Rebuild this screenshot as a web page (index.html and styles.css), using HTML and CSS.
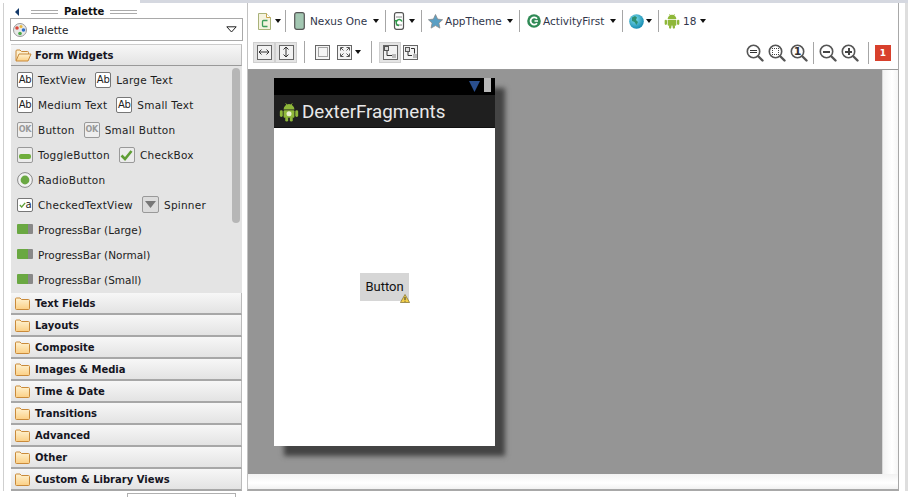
FILE: index.html
```html
<!DOCTYPE html>
<html lang="en">
<head>
<meta charset="utf-8">
<title>DexterFragments layout editor</title>
<link rel="stylesheet" href="styles.css">
</head>
<body>
<svg class="defs" width="0" height="0" aria-hidden="true">
  <defs>
    <linearGradient id="fold" x1="0" y1="0" x2="0" y2="1"><stop offset="0" stop-color="#fff3d2"/><stop offset="1" stop-color="#fbcf84"/></linearGradient>
    <radialGradient id="globe" cx=".4" cy=".35" r=".7"><stop offset="0" stop-color="#7fe0ee"/><stop offset="1" stop-color="#0f85ad"/></radialGradient>
    <symbol id="folder" viewBox="0 0 15 13">
      <path d="M1.5 12.5 a1 1 0 0 1-1-1V2 a1 1 0 0 1 1-1h3.5l1.5 1.5h7 a1 1 0 0 1 1 1v8 a1 1 0 0 1-1 1z" fill="url(#fold)" stroke="#c98a3a"/>
    </symbol>
    <symbol id="folder-open" viewBox="0 0 17 13">
      <path d="M1 11.5V2 a1 1 0 0 1 1-1h3l1.5 1.5h6 a1 1 0 0 1 1 1V5" fill="#fdf0cf" stroke="#c98a3a"/>
      <path d="M1 12 l3-7 h12 l-3 7z" fill="url(#fold)" stroke="#c98a3a"/>
    </symbol>
    <symbol id="android" viewBox="0 0 24 24">
      <g fill="#8fb83a">
        <path d="M5.500 9 a6.500 6.500 0 0 1 13 0z"/>
        <rect x="5.500" y="10" width="13" height="9" rx="1.2"/>
        <rect x="1" y="10" width="3.500" height="8" rx="1.700"/>
        <rect x="19.500" y="10" width="3.500" height="8" rx="1.700"/>
        <rect x="7.500" y="18" width="3.500" height="5.500" rx="1.700"/>
        <rect x="13" y="18" width="3.500" height="5.500" rx="1.700"/>
        <path d="M8 1.500 l2 3M16 1.500 l-2 3" stroke="#8fb83a" stroke-width="1"/>
      </g>
    </symbol>
    <symbol id="magnifier" viewBox="0 0 18 18">
      <circle cx="7.500" cy="7.500" r="6.200" fill="#fff" stroke="#555" stroke-width="1.600"/>
      <path d="M12.500 12.500 L16.500 16.500" stroke="#555" stroke-width="2.400" stroke-linecap="round"/>
    </symbol>
  </defs>
</svg>

<div class="tabstrip"></div>

<main class="main">
  <aside class="palette">
    <header class="palette-title">
      <span class="collapse"></span>
      <span class="grip"></span>
      <span class="palette-name">Palette</span>
      <span class="grip"></span>
    </header>
    <div class="combo">
      <svg class="combo-icon" width="14" height="14" viewBox="0 0 14 14">
        <circle cx="7" cy="7" r="6.500" fill="#e8e8e8" stroke="#999"/>
        <circle cx="4" cy="5" r="1.800" fill="#d9483b"/>
        <circle cx="8" cy="3.500" r="1.500" fill="#e8b93c"/>
        <circle cx="10.500" cy="7" r="1.800" fill="#2e6fc9"/>
        <circle cx="7" cy="10.500" r="1.800" fill="#4aa84a"/>
      </svg>
      <span class="combo-label">Palette</span>
      <svg class="combo-arrow" width="11" height="7" viewBox="0 0 11 7"><path d="M.8.8h9.400L5.500 6z" fill="#fff" stroke="#222"/></svg>
    </div>
    <div class="section section-open">
      <svg class="folder-open" width="17" height="13"><use href="#folder-open"/></svg><span>Form Widgets</span>
    </div>
    <div class="widgets">
      <div class="scrollbar"></div>
      <div class="row"><span class="ab">Ab</span><span class="w">TextView</span><span class="ab">Ab</span><span class="w">Large Text</span></div>
      <div class="row"><span class="ab">Ab</span><span class="w">Medium Text</span><span class="ab">Ab</span><span class="w">Small Text</span></div>
      <div class="row"><span class="ok">OK</span><span class="w">Button</span><span class="ok">OK</span><span class="w">Small Button</span></div>
      <div class="row">
        <span class="box"><span class="toggle"></span></span><span class="w">ToggleButton</span>
        <span class="box"><svg width="13" height="12" viewBox="0 0 13 12"><path d="M1.500 6.500 L5 10 L11.500 2" fill="none" stroke="#5f9e35" stroke-width="2.600"/></svg></span><span class="w">CheckBox</span>
      </div>
      <div class="row">
        <svg class="radio" width="16" height="16" viewBox="0 0 16 16"><circle cx="8" cy="8" r="7.400" fill="#f2f2f2" stroke="#888"/><circle cx="8" cy="8" r="4.400" fill="#6aa842"/></svg><span class="w">RadioButton</span>
      </div>
      <div class="row">
        <span class="ab checked"><svg width="7" height="6" viewBox="0 0 7 6"><path d="M.8 3 L2.700 5 L6.200 .8" fill="none" stroke="#5f9e35" stroke-width="1.300"/></svg>a</span><span class="w">CheckedTextView</span>
        <span class="box spin"><svg width="11" height="7" viewBox="0 0 11 7"><path d="M0 0h11L5.500 7z" fill="#777"/></svg></span><span class="w">Spinner</span>
      </div>
      <div class="row"><span class="progress"></span><span class="w w-tight">ProgressBar (Large)</span></div>
      <div class="row"><span class="progress"></span><span class="w w-tight">ProgressBar (Normal)</span></div>
      <div class="row"><span class="progress"></span><span class="w w-tight">ProgressBar (Small)</span></div>
    </div>
    <div class="section"><svg class="folder" width="15" height="13"><use href="#folder"/></svg><span>Text Fields</span></div>
    <div class="section"><svg class="folder" width="15" height="13"><use href="#folder"/></svg><span>Layouts</span></div>
    <div class="section"><svg class="folder" width="15" height="13"><use href="#folder"/></svg><span>Composite</span></div>
    <div class="section"><svg class="folder" width="15" height="13"><use href="#folder"/></svg><span>Images &amp; Media</span></div>
    <div class="section"><svg class="folder" width="15" height="13"><use href="#folder"/></svg><span>Time &amp; Date</span></div>
    <div class="section"><svg class="folder" width="15" height="13"><use href="#folder"/></svg><span>Transitions</span></div>
    <div class="section"><svg class="folder" width="15" height="13"><use href="#folder"/></svg><span>Advanced</span></div>
    <div class="section"><svg class="folder" width="15" height="13"><use href="#folder"/></svg><span>Other</span></div>
    <div class="section"><svg class="folder" width="15" height="13"><use href="#folder"/></svg><span>Custom &amp; Library Views</span></div>
  </aside>

  <section class="editor">
    <div class="toolbar-one">
      <svg class="ti-doc" width="13" height="17" viewBox="0 0 13 17"><path d="M.5.5h8l4 4v12H.5z" fill="#f5f3df" stroke="#a9b27a"/><path d="M8.500.5v4h4" fill="#fff" stroke="#c9a34a"/><path d="M9.500 7.500h-4a1 1 0 0 0-1 1v4a1 1 0 0 0 1 1h4" fill="none" stroke="#3f9e5a" stroke-width="1.300"/></svg>
      <span class="arrow a1"></span><span class="sep s1"></span>
      <svg class="ti-phone" width="11" height="18" viewBox="0 0 11 18"><rect x=".7" y=".7" width="9.600" height="16.600" rx="2" fill="#a3c7b2" stroke="#555" stroke-width="1.200"/></svg>
      <span class="lbl l-nexus">Nexus One</span>
      <span class="arrow a2"></span><span class="sep s2"></span>
      <svg class="ti-rotate" width="12" height="18" viewBox="0 0 12 18"><rect x="1.500" y=".7" width="9" height="16.600" rx="2" fill="#fff" stroke="#555" stroke-width="1.200"/><path d="M3 5h6M3 13h6" stroke="#888"/><path d="M9 9.500a3 3 0 1 0-3 4" fill="none" stroke="#2f9a4a" stroke-width="1.400"/><path d="M1 8l2.500 2.500L5.500 8" fill="#2f9a4a"/></svg>
      <span class="arrow a3"></span><span class="sep s3"></span>
      <svg class="ti-star" width="15" height="15" viewBox="0 0 15 15"><path d="M7.500.5l2.100 4.600 5 .6-3.700 3.400 1 5-4.400-2.500-4.400 2.500 1-5L.4 5.700l5-.6z" fill="#5a9fc4" stroke="#8a8a8a" stroke-width=".8"/></svg>
      <span class="lbl l-theme">AppTheme</span>
      <span class="arrow a4"></span><span class="sep s4"></span>
      <svg class="ti-c" width="14" height="14" viewBox="0 0 14 14"><circle cx="7" cy="7" r="6.800" fill="#2f8a55"/><path d="M10 4.800a3.600 3.600 0 1 0 0 4.400" fill="none" stroke="#fff" stroke-width="1.800"/><path d="M7.500 7h3.500" stroke="#fff" stroke-width="1.500"/></svg>
      <span class="lbl l-act">ActivityFirst</span>
      <span class="arrow a5"></span><span class="sep s5"></span>
      <svg class="ti-globe" width="15" height="15" viewBox="0 0 15 15"><circle cx="7.500" cy="7.500" r="7.300" fill="url(#globe)"/><path d="M3 3.500l3-1.500 2 1.500-1 2.500 2 2-1.500 3-2-3-2.500-1z" fill="#2d8f72"/></svg>
      <span class="arrow a6"></span><span class="sep s6"></span>
      <svg class="ti-droid" width="16" height="16"><use href="#android"/></svg>
      <span class="lbl l-api">18</span>
      <span class="arrow a7"></span>
    </div>

    <div class="toolbar-two">
      <span class="tbtn on"><span class="tglyph">
        <svg width="12" height="12" viewBox="0 0 12 12"><path d="M1 6h10M1 6l2.500-2.500M1 6l2.500 2.500M11 6L8.500 3.500M11 6L8.500 8.500" fill="none" stroke="#333"/></svg>
      </span></span>
      <span class="tbtn on"><span class="tglyph">
        <svg width="12" height="12" viewBox="0 0 12 12"><path d="M6 1v10M6 1L3.500 3.500M6 1l2.500 2.500M6 11L3.500 8.500M6 11l2.500-2.500" fill="none" stroke="#333"/></svg>
      </span></span>
      <span class="sep s7"></span>
      <span class="tglyph plain p1"><svg width="10" height="10" viewBox="0 0 10 10"><rect x=".5" y=".5" width="9" height="9" fill="none" stroke="#555" stroke-dasharray="1 1"/></svg></span>
      <span class="tglyph plain p2"><svg width="10" height="10" viewBox="0 0 10 10"><path d="M.5 3.500v-3h3M6.500.5h3v3M9.500 6.500v3h-3M3.500 9.500h-3v-3M1 1l2.500 2.500M9 1L6.500 3.500M9 9L6.500 6.500M1 9l2.500-2.500" fill="none" stroke="#555"/></svg></span>
      <span class="arrow a8"></span>
      <span class="sep s8"></span>
      <span class="tbtn on t3"><span class="tglyph">
        <svg width="12" height="12" viewBox="0 0 12 12"><rect x=".5" y=".5" width="4" height="4" fill="#ddd" stroke="#555"/><rect x="8" y="8" width="4" height="4" fill="#bbb"/><path d="M3 5v4.500h5" fill="none" stroke="#333"/></svg>
      </span></span>
      <span class="tglyph plain p3"><svg width="12" height="12" viewBox="0 0 12 12"><rect x=".5" y="1.500" width="4" height="4" fill="#ddd" stroke="#555"/><rect x="8" y="8" width="4" height="4" fill="#bbb"/><path d="M6 2.500h3.500v5M3 6v3.500h4" fill="none" stroke="#333"/></svg></span>

      <div class="zooms">
        <span class="zoom"><svg width="18" height="18"><use href="#magnifier"/></svg><span class="zm zm-eq"></span></span>
        <span class="zoom"><svg width="18" height="18"><use href="#magnifier"/></svg><span class="zm zm-fit"></span></span>
        <span class="zoom"><svg width="18" height="18"><use href="#magnifier"/></svg><span class="zm-one">1</span></span>
        <span class="sep s9"></span>
        <span class="zoom"><svg width="18" height="18"><use href="#magnifier"/></svg><span class="zm zm-minus"></span></span>
        <span class="zoom"><svg width="18" height="18"><use href="#magnifier"/></svg><span class="zm zm-plus"></span></span>
        <span class="sep s10"></span>
        <span class="badge">1</span>
      </div>
    </div>

    <div class="workarea">
      <div class="canvas-row">
        <div class="canvas">
          <div class="device">
            <div class="statusbar">
              <svg width="11" height="11" viewBox="0 0 11 11"><path d="M0 0h11L5.500 11z" fill="#2a4f8f"/></svg>
              <span class="battery"></span>
            </div>
            <div class="actionbar">
              <svg class="app-icon" width="20" height="22" viewBox="0 0 24 24"><use href="#android"/><circle cx="12" cy="14" r="3" fill="#e8eecd"/></svg>
              <span class="app-title">DexterFragments</span>
            </div>
            <div class="screen">
              <div class="button">Button
                <svg class="warn" width="10" height="9" viewBox="0 0 10 9"><path d="M5 .5L9.600 8.500H.4z" fill="#f3cf4a" stroke="#8a7a3a" stroke-width=".8"/><path d="M5 3v3M5 6.800v.8" stroke="#333"/></svg>
              </div>
            </div>
          </div>
        </div>
        <div class="vgutter"></div>
      </div>
      <div class="hgutter"></div>
    </div>
  </section>
  <div class="rightedge"></div>
</main>
<div class="bottomstrip"><div class="bottombox"></div></div>
</body>
</html>
```

FILE: styles.css
```css
* { box-sizing: border-box; }
html, body { margin: 0; height: 100%; }
body {
  width: 908px;
  height: 497px;
  overflow: hidden;
  background: #fff;
  display: flex;
  flex-direction: column;
  font-family: "DejaVu Sans", sans-serif;
  font-size: 10.5px;
  color: #1c1c1c;
}
.defs { position: absolute; }
.tabstrip { height: 3px; margin-left: 140px; background: #d5d8e0; flex: none; }
.main { height: 488px; display: flex; flex: none; }

/* palette */
.palette {
  width: 244px;
  margin-left: 3px;
  border-left: 1px solid #cfcfcf;
  padding-left: 6px;
  flex: none;
  display: flex;
  flex-direction: column;
}
.palette-title { height: 15px; padding-top: 2px; display: flex; align-items: center; gap: 6px; font-weight: bold; font-size: 10px; flex: none; }
.collapse { width: 0; height: 0; border: 4px solid transparent; border-right: 4px solid #143a6b; border-left: 0; margin: 0 6px 0 5px; }
.grip { width: 27px; height: 4px; border-top: 1px solid #aaa; border-bottom: 1px solid #aaa; }
.palette-name { color: #111; }
.combo {
  width: 233px; height: 23px; flex: none;
  border: 1px solid #a9a9a9;
  display: flex; align-items: center; padding: 0 5px 0 2px;
  gap: 5px;
}
.combo-label { flex: 1; }
.section {
  width: 231px; height: 22px; flex: none;
  margin-left: 1px;
  border-bottom: 2px solid #a7a7a7;
  border-right: 1px solid #bbb;
  background: linear-gradient(#f7f7f7, #e3e3e3);
  display: flex; align-items: center; gap: 5px;
  padding-left: 4px;
  font-weight: bold;
  font-size: 10px;
  color: #15151f;
}
.section-open { margin-top: 3px; height: 22px; border-top: 1px solid #ccc; border-bottom: 1px solid #999; padding-left: 4px; gap: 3px; }
.widgets {
  width: 231px; height: 227px; flex: none;
  margin-left: 1px;
  background: #e4e4e4;
  position: relative;
  padding-top: 1px;
}
.scrollbar { position: absolute; top: 2px; right: 2px; width: 8px; height: 155px; border-radius: 4px; background: #b6b6b6; }
.row { height: 25px; display: flex; align-items: center; padding-left: 6px; }
.w { margin-left: 5px; margin-right: 9px; letter-spacing: .25px; }
.w-tight { letter-spacing: 0; }
.ab, .ok, .box {
  width: 16px; height: 16px; flex: none;
  border: 1px solid #777; border-radius: 2px;
  background: #fff;
  display: flex; align-items: center; justify-content: center;
  font-size: 10px; letter-spacing: -.3px;
}
.ok { border-color: #999; background: #eee; color: #999; font-size: 8px; font-weight: bold; }
.box { background: #ececec; border-color: #999; }
.toggle { width: 12px; height: 5px; border-radius: 2px; background: #6fae3c; margin-top: 4px; }
.checked { height: 14px; color: #222; gap: 0; }
.spin { width: 17px; height: 17px; background: #dcdcdc; }
.progress { width: 16px; height: 10px; background: linear-gradient(90deg, #6aa842 70%, #888 70%); flex: none; margin-top: -2px; border-radius: 1px; }
.radio { flex: none; }

/* editor */
.editor {
  width: 652px; flex: none;
  margin-left: 0;
  border-left: 1px solid #c2c2c2;
  border-right: 1px solid #a8a8a8;
  border-bottom: 2px solid #a8a8a8;
  display: flex; flex-direction: column;
}
.toolbar-one { height: 32px; flex: none; display: flex; align-items: center; padding: 4px 0 0 10px; font-size: 10.5px; color: #30364a; }
.toolbar-two { height: 34px; flex: none; display: flex; align-items: center; padding: 0 7px 0 5px; }
.arrow { width: 0; height: 0; flex: none; border-left: 3px solid transparent; border-right: 3px solid transparent; border-top: 4px solid #111; }
.sep { width: 1px; height: 22px; background: #a6a6a6; flex: none; }
.a1 { margin-left: 4px; } .s1 { margin: 0 8px 0 4px; }
.l-nexus { margin-left: 5px; width: 63px; }
.s2 { margin: 0 7px 0 6px; }
.a3 { margin-left: 4px; } .s3 { margin: 0 6px 0 6px; }
.l-theme { margin-left: 2px; width: 62px; }
.s4 { margin: 0 7px 0 6px; }
.l-act { margin-left: 2px; width: 67px; }
.s5 { margin: 0 6px 0 6px; }
.a6 { margin-left: 2px; } .s6 { margin: 0 5px 0 6px; }
.l-api { margin-left: 3px; width: 17px; }
.tbtn { width: 22px; height: 21px; flex: none; background: #e4e4e4; border: 1px solid #d0d0d0; display: flex; align-items: center; justify-content: center; }
.tglyph { width: 15px; height: 15px; flex: none; border: 1px solid #666; background: #f2f2f2; display: flex; align-items: center; justify-content: center; }
.plain { background: #f4f4f4; }
.s7 { margin: 0 10px 0 7px; }
.p1 { margin-right: 7px; }
.a8 { margin-left: 3px; }
.s8 { margin: 0 7px 0 10px; }
.p3 { margin-left: 2px; }
.zooms { margin: 1px 0 0 auto; display: flex; align-items: center; gap: 4px; }
.zoom { width: 18px; height: 18px; position: relative; flex: none; }
.zoom svg { display: block; }
.zm { position: absolute; left: 4px; top: 6px; width: 7px; height: 3px; }
.zm-eq { border-top: 1px solid #333; border-bottom: 1px solid #333; }
.zm-fit { left: 4px; top: 4px; width: 7px; height: 7px; border: 1px dotted #444; }
.zm-minus { top: 7px; height: 2px; background: #444; }
.zm-plus { top: 7px; height: 2px; background: #444; }
.zm-plus::after { content: ""; position: absolute; left: 2.500px; top: -2.500px; width: 2px; height: 7px; background: #444; }
.zm-one { position: absolute; left: 0; width: 15px; top: 1px; text-align: center; font-size: 11px; font-weight: bold; line-height: 13px; color: #333; }
.s9 { margin: 0 1px; }
.s10 { margin: 0 1px 0 5px; }
.badge { width: 16px; height: 16px; background: #d8402c; color: #fff; font-size: 9px; font-weight: bold; display: flex; align-items: center; justify-content: center; margin-left: 1px; }

.workarea { flex: 1; display: flex; flex-direction: column; min-height: 0; border-top: 1px solid #999; }
.canvas-row { flex: 1; display: flex; min-height: 0; }
.canvas { width: 635px; background: #959595; padding: 8px 0 0 26px; border-right: 1px solid #d8d8d8; flex: none; overflow: hidden; }
.vgutter { flex: 1; background: linear-gradient(90deg, #f2f2f2, #fff 60%, #f5f5f5); }
.hgutter { height: 15px; flex: none; background: linear-gradient(#f2f2f2, #fff 60%, #f2f2f2); }
.device { width: 221px; height: 368px; background: #fff; display: flex; flex-direction: column; box-shadow: 10px 10px 5px #444; }
.statusbar { height: 17px; flex: none; background: #000; display: flex; align-items: center; justify-content: flex-end; padding-right: 4px; gap: 4px; }
.battery { width: 7px; height: 14px; background: #b8b8b8; margin-top: -3px; }
.actionbar { height: 33px; flex: none; background: #1f1f1f; border-bottom: 1px solid #111; display: flex; align-items: center; padding: 1px 0 0 5px; gap: 3px; }
.app-icon { flex: none; }
.app-title { font-family: Roboto, sans-serif; font-size: 18.75px; color: #e8e8e8; }
.screen { flex: 1; display: flex; align-items: center; justify-content: center; }
.button { position: relative; width: 49px; height: 28px; padding-bottom: 2px; background: #d6d6d6; font-family: Roboto, sans-serif; font-size: 13px; color: #111; display: flex; align-items: center; justify-content: center; }
.warn { position: absolute; right: -1px; bottom: -2px; }
.rightedge { width: 9px; flex: none; border-right: 3px solid #dedede; }
.bottomstrip { flex: 1; }
.bottombox { margin: 2px 0 0 127px; width: 109px; height: 10px; border: 1px solid #b0b0b0; }
```
